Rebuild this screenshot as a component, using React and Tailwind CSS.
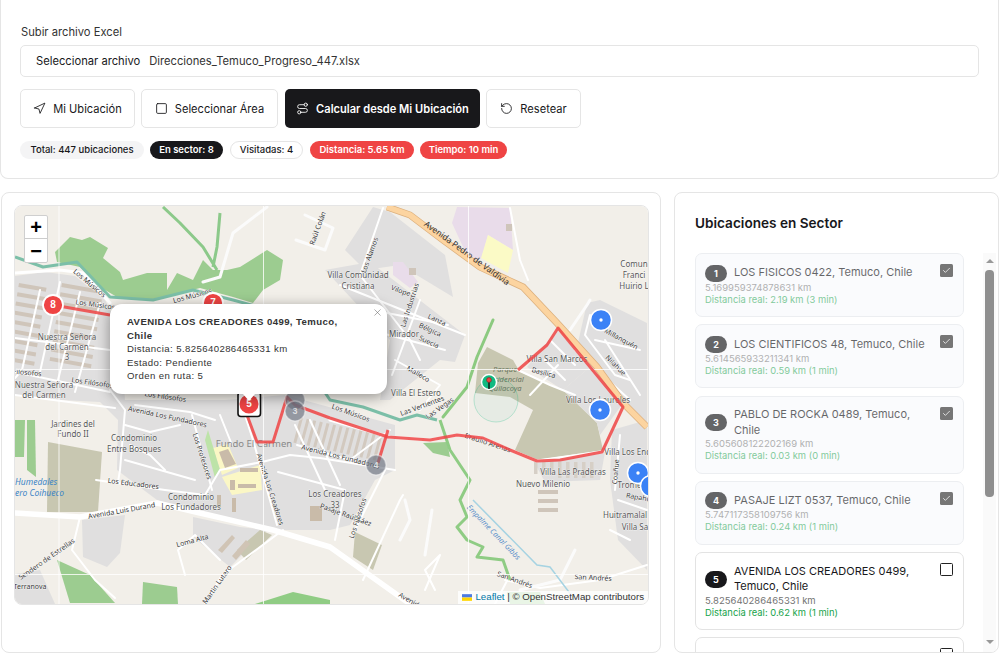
import React from "react";
import { Navigation, Square, Route, RotateCcw, Check, X } from "lucide-react";

const poly = (pts) => pts.map((p) => p.join(",")).join(" ");

const GREY = [
  [[15,276],[45,272],[75,276],[105,300],[120,330],[125,400],[225,400],[285,395],[395,425],[395,470],[375,480],[350,525],[330,530],[273,530],[200,513],[157,500],[117,470],[118,420],[100,402],[60,400],[15,395]],
  [[373,207],[390,212],[445,255],[453,297],[400,265],[365,270],[345,250]],
  [[325,270],[370,262],[465,335],[455,362],[440,360],[390,400],[380,400],[390,340]],
  [[587,303],[600,300],[647,323],[647,423],[623,403],[577,347]],
  [[557,330],[590,367],[563,390],[527,367]],
  [[563,390],[590,367],[623,403],[600,435],[597,423]],
  [[612,430],[647,420],[647,570],[618,540],[610,480]],
  [[533,460],[605,452],[600,480],[545,482]],
  [[193,517],[240,527],[267,530],[230,567],[193,537]],
  [[82,520],[125,515],[120,553],[107,567],[83,557]],
  [[15,574],[40,570],[55,604],[15,604]],
];

const GREEN = [
  [[55,252],[70,237],[82,240],[90,237],[108,248],[103,258],[120,272],[123,280],[147,273],[167,273],[167,290],[177,273],[193,280],[203,260],[213,270],[227,270],[240,267],[267,250],[283,260],[280,280],[263,290],[253,303],[233,297],[200,288],[153,300],[117,297],[100,287],[80,267],[57,262]],
  [[57,560],[90,575],[115,603],[70,603]],
  [[143,582],[177,587],[178,604],[142,604]],
  [[423,443],[447,442],[450,457],[433,453]],
  [[15,420],[25,420],[24,457],[15,457]],
  [[27,420],[35,420],[36,477],[27,470]],
];

const ROADS = [
  [[15,273],[60,270],[83,273],[110,303]],
  [[40,290],[22,370],[15,378]],
  [[60,282],[40,372]],
  [[80,292],[58,380]],
  [[100,303],[75,392]],
  [[15,338],[110,350]],
  [[15,372],[110,392]],
  [[15,395],[115,408]],
  [[110,390],[125,410],[120,470],[118,482]],
  [[96,480],[165,490],[205,495]],
  [[15,513],[80,517],[157,503],[200,513],[273,530],[330,547],[410,604]],
  [[205,495],[220,470],[262,462],[290,455],[320,458],[395,470]],
  [[240,400],[253,440],[277,525]],
  [[192,415],[212,490]],
  [[297,445],[350,460],[390,430]],
  [[385,470],[355,530]],
  [[278,472],[345,490],[335,540]],
  [[80,517],[72,550],[95,580],[115,598]],
  [[185,575],[178,550],[195,535],[220,560]],
  [[283,530],[222,575],[205,604]],
  [[363,580],[400,500],[403,495]],
  [[425,590],[440,555],[425,570],[435,590]],
  [[510,575],[495,604]],
  [[505,580],[540,588],[600,580],[647,565]],
  [[330,420],[390,437],[430,440],[457,435],[483,438],[510,450],[537,461],[602,452]],
  [[383,208],[360,275],[410,340],[420,360]],
  [[340,285],[465,335]],
  [[420,300],[392,375]],
  [[395,360],[440,385],[420,410]],
  [[510,208],[520,260],[528,280]],
  [[518,370],[550,385],[575,395]],
  [[558,365],[530,395]],
  [[575,350],[630,400]],
  [[590,315],[585,335],[615,375],[630,380]],
  [[595,340],[640,350]],
  [[620,435],[615,490]],
  [[618,500],[647,510]],
  [[610,530],[630,540]],
  [[125,425],[150,432],[180,425]],
  [[130,445],[150,455],[165,470]],
  [[220,415],[232,445]],
  [[295,425],[325,490]],
  [[310,420],[340,485]],
  [[125,460],[195,480]],
  [[135,405],[190,412],[215,420]],
  [[345,320],[330,350]],
  [[370,330],[445,350]],
  [[382,312],[448,325]],
  [[605,340],[640,395]],
  [[550,340],[575,365]],
  [[545,360],[565,380]],
];

const DASHED = [
  [[590,300],[587,305],[570,330]],
  [[267,207],[233,233],[220,277],[203,282]],
  [[296,240],[325,250],[333,228],[305,215]],
  [[400,540],[410,520],[405,500]],
  [[432,510],[425,555]],
  [[575,550],[560,580],[520,590]],
];

const LABELS = [
  ["Los Músicos",88,285,40,7],["Los Músicos",193,298,-15,7],["Los Músicos",95,307,8,7],
  ["Nuestra Señora",67,340,0,8],["del Carmen",67,350,0,8],["3",67,360,0,8],
  ["Filósofos",27,375,5,7],["Nuestra Señora",44,388,0,8],["del Carmen",44,398,0,8],["Los Filósofos",92,385,8,7],
  ["Los Filósofos",165,399,8,7],["Avenida Los Fundadores",167,419,12,7],
  ["Jardines del",73,427,0,8],["Fundo II",73,437,0,8],["Condominio",134,441,0,8],["Entre Bosques",134,452,0,8],
  ["Los Educadores",133,486,7,7],["Condominio",191,500,0,8],["Los Fundadores",191,510,0,8],
  ["Avenida Luis Durand",122,513,-10,7],["Avenida Los Creadores",268,490,72,7],["Los Profesores",200,457,72,7],
  ["Avenida Los Fundadores",340,459,14,7],["Los Creadores",335,497,0,8],["33",335,508,0,8],
  ["Pasaje Raúl Sáez",345,517,20,7],["Los Filósofos",360,519,-72,7],["Loma Alta",193,543,-15,7],
  ["Martin Lutero",219,586,-55,7],["Sendero de Estrellas",48,561,-35,7],["Terranova",30,589,0,7],
  ["Avenida Los",415,606,30,7],["San Andrés",514,582,20,7],["San Andrés",593,580,3,7],
  ["Nuevo Milenio",543,487,0,8],["Villa Las Praderas",573,475,0,8],["Braulio Arenas",487,445,18,7],
  ["Villa Los Encinos",635,455,0,8],["Tromen",632,488,0,8],["Huitramalal",625,518,0,8],["Villa Sa",635,530,0,8],
  ["Rapahue",640,500,10,7],["Coañue",618,472,-85,7],["Villa San Marcos",557,362,0,8],["Basílica",543,375,15,7],
  ["Villa Los Laureles",598,403,0,8],["Villa El Estero",416,396,0,8],["Mirador",404,337,0,8],
  ["Suecia",428,344,25,7],["Bélgica",429,332,25,7],["Lanza",436,322,25,7],["Las Industrias",412,306,-72,7],
  ["Villa Comunidad",358,278,0,8],["Cristiana",358,289,0,8],["Vilope",400,293,20,7],["Los Alamos",372,256,-70,7],
  ["Malleco",417,376,30,7],["Las Vertientes",423,408,-20,7],["Las Vegas",441,410,-35,7],
  ["Raúl Colán",320,229,-70,7],["Comun",634,267,0,8],["Franci",634,278,0,8],["Huirio L",634,289,0,8],
  ["Millanquén",620,341,28,7],["Nilahue",614,367,45,7],["Los Músicos",350,415,20,7],
];

function MapArt() {
  const stripes = [];
  for (let r = 0; r < 9; r++) {
    for (const x0 of [19, 62]) {
      stripes.push(<rect key={`a${r}${x0}`} x={x0 - r * 1.5} y={283 + r * 9.5} width={x0 === 19 ? 28 : 42} height={4} transform={`rotate(10 ${x0} ${283 + r * 9.5})`} fill="#cfc5ba" />);
    }
  }
  for (let i = 0; i < 13; i++) {
    stripes.push(<rect key={`b${i}`} x={298 + i * 7} y={417 + i * 1.5} width={3} height={26} transform={`rotate(15 ${298 + i * 7} 425)`} fill="#d2c9bf" />);
  }
  for (let i = 0; i < 8; i++) {
    stripes.push(<rect key={`c${i}`} x={534 + i * 8} y={462} width={3.5} height={i < 3 ? 12 : 16} fill="#d6cfc6" />);
  }
  for (let i = 0; i < 3; i++) {
    stripes.push(<rect key={`d${i}`} x={538} y={490 + i * 9} width={20} height={4} fill="#cfc5ba" />);
  }
  return (
    <svg viewBox="15 206 633 398" className="block w-full h-full" style={{ fontFamily: '"Noto Sans", sans-serif' }}>
      <rect x="15" y="206" width="633" height="398" fill="#f2efe9" />
      <polygon points="48,442 102,452 98,512 47,512" fill="#c8c7b1" />
      <polygon points="487,347 513,360 520,372 563,390 597,423 603,450 537,460 515,450 533,410 510,397 475,393 478,363" fill="#c8c7b1" />
      {GREY.map((p, i) => <polygon key={i} points={poly(p)} fill="#e0dfdf" />)}
      <polygon points="355,532 382,545 373,570 353,557" fill="#c8c7b1" />
      <polygon points="260,530 237,550 246,560 272,535" fill="#c8c7b1" />
      <polygon points="452,223 457,207 510,208 513,250 488,235 482,258 470,262" fill="#e9dcea" />
      <polygon points="393,262 403,262 418,282 410,288 393,275" fill="#e9dcea" />
      <rect x="409" y="268" width="7" height="7" fill="#cfc5ba" />
      <rect x="506" y="224" width="6" height="7" fill="#cfc5ba" />
      <polygon points="488,235 513,250 508,273 481,258" fill="#fbfac6" />
      <polygon points="213,448 228,444 238,468 222,475" fill="#fbf7c5" />
      <polygon points="222,477 260,465 262,490 232,495" fill="#fbf7c5" />
      <polygon points="219,452 228,449 236,464 225,468" fill="#c9bba9" />
      <rect x="240" y="468" width="18" height="4" fill="#c9bba9" />
      <rect x="238" y="484" width="18" height="4" fill="#c9bba9" />
      <rect x="230" y="480" width="5" height="10" fill="#c9bba9" />
      <rect x="217" y="495" width="4" height="12" fill="#c9bba9" />
      <rect x="232" y="498" width="4" height="14" fill="#c9bba9" />
      <polygon points="218,550 232,535 235,538 222,553" fill="#d0c4b5" />
      <polygon points="232,556 246,540 250,544 236,560" fill="#d0c4b5" />
      <rect x="310" y="506" width="12" height="15" fill="#c9bba9" />
      {GREEN.map((p, i) => <polygon key={i} points={poly(p)} fill="#9ccc90" />)}
      <polygon points="205,440 215,478 220,470 208,430" fill="#bde3a8" />
      {stripes}
      {ROADS.map((p, i) => (
        <polyline key={i} points={poly(p)} fill="none" stroke="#ffffff" strokeWidth={i === 10 ? 5.5 : i === 0 || i === 24 ? 3 : 2} strokeLinejoin="round" strokeLinecap="round" />
      ))}
      {DASHED.map((p, i) => (
        <polyline key={i} points={poly(p)} fill="none" stroke="#fbfbfb" strokeWidth="3" strokeLinejoin="round" strokeLinecap="round" />
      ))}
      <polyline points="15,257 43,267 77,262 110,297 153,300 193,290 233,300 270,310 330,400 363,407 400,420 417,415 437,420" fill="none" stroke="#7cbfa8" strokeWidth="3" strokeLinejoin="round" />
      <polyline points="493,320 477,357 467,387 443,417" fill="none" stroke="#8cca80" strokeWidth="3" strokeLinejoin="round" strokeLinecap="round" />
      <polyline points="163,207 180,223 203,247 217,270" fill="none" stroke="#8cc98a" strokeWidth="3" strokeLinejoin="round" />
      <polyline points="220,213 217,247 213,267" fill="none" stroke="#8cc98a" strokeWidth="3" strokeLinejoin="round" />
      <polyline points="440,420 450,450 470,480 460,500 467,517 457,527 467,540 483,547 477,557 503,560 510,580" fill="none" stroke="#8fcc84" strokeWidth="3" strokeLinejoin="round" />
      <polyline points="473,500 537,565 550,567 575,600" fill="none" stroke="#a6d3e2" strokeWidth="1.5" />
      <path d="M255 604 L293 592 L330 600 L330 604 Z" fill="#90cc84" />
      <path d="M507 592 L540 592 L545 604 L510 604 Z" fill="#90cc84" />
      <polyline points="387,207 410,215 443,240 480,267 523,287 557,323 597,367 623,403 647,427" fill="none" stroke="#dcb07e" strokeWidth="7" />
      <polyline points="387,207 410,215 443,240 480,267 523,287 557,323 597,367 623,403 647,427" fill="none" stroke="#fcd4a0" strokeWidth="5.5" />
      <text fill="#3d85c6" fontStyle="italic" fontSize="8.5"><tspan x="15" y="485">Humedales</tspan><tspan x="15" y="496">ero Coihueco</tspan></text>
      <text x="494" y="535" fill="#5b8fc9" fontStyle="italic" fontSize="7.5" textAnchor="middle" transform="rotate(46 494 532)">Empalme Canal Gibbs</text>
      <text x="254" y="447" fill="#888888" fontSize="9.5" textAnchor="middle">Fundo El Carmen</text>
      <text x="467" y="256" fill="#333" fontSize="8.5" textAnchor="middle" transform="rotate(36 467 253)">Avenida Pedro de Valdivia</text>
      <text fill="#68755e" fontStyle="italic" fontSize="7.5" textAnchor="middle"><tspan x="505" y="372">Parque</tspan><tspan x="505" y="382">Residencial</tspan><tspan x="505" y="391">Quilacoya</tspan></text>
      {LABELS.map(([t, x, y, r, s], i) => (
        <text key={i} x={x} y={y} fontSize={s} fill={s === 8 ? "#555" : "#333"} textAnchor="middle" transform={r ? `rotate(${r} ${x} ${y})` : undefined} stroke="#fff" strokeWidth="0.6" paintOrder="stroke">{t}</text>
      ))}
      <line x1="59" y1="206" x2="59" y2="604" stroke="#fff" strokeWidth="0.8" />
      <line x1="263.5" y1="206" x2="263.5" y2="604" stroke="#fff" strokeWidth="0.8" />
      <line x1="468.5" y1="206" x2="468.5" y2="604" stroke="#fff" strokeWidth="0.8" />
      <line x1="15" y1="369.5" x2="648" y2="369.5" stroke="#fff" strokeWidth="0.8" />
      <line x1="15" y1="574.5" x2="648" y2="574.5" stroke="#fff" strokeWidth="0.8" />
      <polyline points="53,305 110,315" fill="none" stroke="#ef4444" strokeOpacity="0.85" strokeWidth="3" />
      <polyline points="247,415 257,442 273,442 287,397 295,405 330,418 388,437 430,440 457,435 483,438 510,450 537,461 560,460 602,452 617,420 623,407 558,328 547,345 518,370" fill="none" stroke="#ef4444" strokeOpacity="0.85" strokeWidth="3" strokeLinejoin="round" />
      <polyline points="388,430 378,463" fill="none" stroke="#ef4444" strokeOpacity="0.85" strokeWidth="3" />
      <circle cx="496" cy="400" r="22" fill="#10b981" fillOpacity="0.05" stroke="#10b981" strokeOpacity="0.25" strokeWidth="1" />
      <circle cx="489" cy="382" r="7.5" fill="#10b981" stroke="#fff" strokeWidth="1.5" />
      <line x1="489" y1="382" x2="489" y2="389" stroke="#111" strokeWidth="1.4" />
      <circle cx="489" cy="380" r="2.4" fill="#ef4444" stroke="#7f1d1d" strokeWidth="0.6" />
      {[[601,320],[600,410],[638,473],[651,486]].map(([x, y], i) => (
        <g key={i}>
          <circle cx={x} cy={y} r="10.5" fill="#3b82f6" stroke="#fff" strokeWidth="1.5" />
          <circle cx={x} cy={y} r="1.7" fill="#fff" />
        </g>
      ))}
      <rect x="238" y="392" width="22.5" height="24.5" rx="3" fill="#fff" stroke="#111" strokeWidth="1.6" />
      {[[295,400,""],[295,411,"3"],[376,465,"4"]].map(([x, y, n], i) => (
        <g key={i}>
          <circle cx={x} cy={y} r="10" fill="#6b7280" fillOpacity="0.65" stroke="#fff" strokeOpacity="0.4" strokeWidth="1.5" />
          <text x={x} y={y + 3.2} textAnchor="middle" fontSize="9" fontWeight="700" fill="#fff" fillOpacity="0.7" style={{ fontFamily: '"Liberation Sans", sans-serif' }}>{n}</text>
        </g>
      ))}
      {[[53,305,"8"],[213,303,"7"],[249,404,"5"]].map(([x, y, n], i) => (
        <g key={i}>
          <circle cx={x} cy={y} r={i === 2 ? 9.5 : 10} fill="#ef4444" stroke={i === 2 ? "none" : "#fff"} strokeWidth="1.8" />
          <text x={x} y={y + 3.4} textAnchor="middle" fontSize="10" fontWeight="700" fill="#fff" style={{ fontFamily: '"Liberation Sans", sans-serif' }}>{n}</text>
        </g>
      ))}
    </svg>
  );
}

const Btn = ({ icon: I, children, dark, className = "" }) => (
  <button className={`h-[39px] flex items-center justify-center gap-[7px] rounded-[5px] text-[11.1px] ${dark ? "bg-[#18181b] text-white font-semibold" : "bg-white border border-[#e5e5e5] text-[#18181b] font-normal"} ${className}`}>
    <I size={13} strokeWidth={1.6} />
    <span className="pt-[1px]">{children}</span>
  </button>
);

const Badge = ({ children, className = "" }) => (
  <span className={`h-[18px] flex items-center justify-center rounded-full text-[9.5px] ${className}`}>{children}</span>
);

const ITEMS = [
  { n: 1, name: "LOS FISICOS 0422, Temuco, Chile", d: "5.169959374878631 km", r: "Distancia real: 2.19 km (3 min)", done: true },
  { n: 2, name: "LOS CIENTIFICOS 48, Temuco, Chile", d: "5.614565933211341 km", r: "Distancia real: 0.59 km (1 min)", done: true },
  { n: 3, name: "PABLO DE ROCKA 0489, Temuco, Chile", d: "5.605608122202169 km", r: "Distancia real: 0.03 km (0 min)", done: true },
  { n: 4, name: "PASAJE LIZT 0537, Temuco, Chile", d: "5.747117358109756 km", r: "Distancia real: 0.24 km (1 min)", done: true },
  { n: 5, name: "AVENIDA LOS CREADORES 0499, Temuco, Chile", d: "5.825640286465331 km", r: "Distancia real: 0.62 km (1 min)", done: false },
  { n: 6, name: "NICOLO PAGANINI 0241, Temuco, Chile", d: "5.9 km", r: "", done: false },
];

const Item = ({ n, name, d, r, done }) => (
  <div className={`shrink-0 relative rounded-[7px] border pl-[9px] pr-[10px] py-[10.5px] ${done ? "bg-[#fafbfd] border-[#eceef1]" : "bg-white border-[#e3e3e3]"}`}>
    <div className={`flex items-center gap-[7px] pr-[24px] ${done ? "opacity-[0.66]" : ""}`}>
      <span className="shrink-0 h-[17px] px-[8px] rounded-full bg-[#18181b] text-white text-[9px] font-bold flex items-center justify-center leading-none min-w-[22px]">{n}</span>
      <span className="text-[11px] leading-[15.5px] font-normal text-[#18181b]">{name}</span>
    </div>
    <div className={`text-[9.5px] leading-[12px] text-[#737373] ${done ? "opacity-[0.55]" : ""}`}>{d}</div>
    <div className={`text-[9.4px] leading-[12px] text-[#16a34a] ${done ? "opacity-[0.55]" : ""}`}>{r}</div>
    <span className={`absolute right-[10px] top-[10px] w-[13px] h-[13px] rounded-[1.5px] flex items-center justify-center ${done ? "bg-[#767676]" : "bg-white border border-[#222]"}`}>
      {done && <Check size={9} strokeWidth={2} color="#fff" />}
    </span>
  </div>
);

export default function App() {
  return (
    <div className="w-[999px] h-[664px] bg-white flex flex-col gap-[13px] overflow-hidden text-[#18181b]" style={{ fontFamily: 'Inter, "Liberation Sans", sans-serif' }}>
      <section className="h-[179px] shrink-0 border border-t-0 border-[#e5e5e5] rounded-b-[8px] px-[19px] pt-[25px]">
        <label className="block text-[11.2px] leading-[14px] font-normal text-[#333] pl-[1px]">Subir archivo Excel</label>
        <div className="mt-[6px] h-[32px] border border-[#e5e5e5] rounded-[5px] flex items-center pl-[15px] text-[11.2px]">
          <span className="font-normal mr-[9px]">Seleccionar archivo</span>
          <span className="text-[#333]">Direcciones_Temuco_Progreso_447.xlsx</span>
        </div>
        <div className="mt-[12px] flex gap-[6px]">
          <Btn icon={Navigation} className="w-[115px]">Mi Ubicación</Btn>
          <Btn icon={Square} className="w-[137px]">Seleccionar Área</Btn>
          <Btn icon={Route} dark className="w-[195px] ml-[1px]">Calcular desde Mi Ubicación</Btn>
          <Btn icon={RotateCcw} className="w-[95px]">Resetear</Btn>
        </div>
        <div className="mt-[13px] flex gap-[6px]">
          <Badge className="w-[124px] bg-[#f4f4f5] font-medium">Total: 447 ubicaciones</Badge>
          <Badge className="w-[73px] bg-[#18181b] text-white font-semibold">En sector: 8</Badge>
          <Badge className="w-[73px] ml-[1px] bg-white border border-[#e5e5e5] font-medium">Visitadas: 4</Badge>
          <Badge className="w-[104px] ml-[1px] bg-[#ef4444] text-white font-semibold">Distancia: 5.65 km</Badge>
          <Badge className="w-[87px] bg-[#ef4444] text-white font-semibold">Tiempo: 10 min</Badge>
        </div>
      </section>

      <div className="flex gap-[13px] h-[461px] shrink-0 pl-[1px]">
        <section className="w-[660px] border border-[#e5e5e5] rounded-[8px] pt-[12px] pl-[12px]">
          <div className="relative w-[635px] h-[400px] rounded-[8px] border border-[#e5e5e5] overflow-hidden">
            <MapArt />
            <div className="absolute left-[9px] top-[9px] w-[24px] h-[48px] bg-white rounded-[2px] border border-[#cfcfcf] flex flex-col text-black" style={{ fontFamily: '"Liberation Sans", sans-serif' }}>
              <span className="h-[23px] flex items-center justify-center text-[20px] font-bold border-b border-[#ccc] leading-none">+</span>
              <span className="flex-1 flex items-center justify-center text-[20px] font-bold leading-none">−</span>
            </div>
            <div className="absolute left-[95px] top-[98px] w-[277px] h-[90px] bg-white rounded-[12px] shadow-[0_3px_14px_rgba(0,0,0,0.4)] pl-[17px] pt-[11px] text-[9.6px] leading-[13.6px] tracking-[0.4px] text-[#333]" style={{ fontFamily: '"Liberation Sans", sans-serif' }}>
              <div className="font-bold w-[225px]">AVENIDA LOS CREADORES 0499, Temuco, Chile</div>
              <div>Distancia: 5.825640286465331 km</div>
              <div>Estado: Pendiente</div>
              <div>Orden en ruta: 5</div>
              <X size={11} strokeWidth={1.2} color="#666" className="absolute right-[4px] top-[3px]" />
            </div>
            <div className="absolute left-[228px] top-[188px] w-0 h-0 border-x-[6px] border-x-transparent border-t-[7px] border-t-white" />
            <div className="absolute right-0 bottom-0 h-[13px] bg-white/80 pl-[4px] pr-[4px] flex items-center text-[9.7px] text-[#333]" style={{ fontFamily: '"Liberation Sans", sans-serif' }}>
              <svg width="10" height="7" viewBox="0 0 12 8" className="mr-[3px]">
                <rect width="12" height="4" fill="#4C7BE1" />
                <rect y="4" width="12" height="4" fill="#FFD500" />
              </svg>
              <span className="text-[#0078a8]">Leaflet</span>
              <span>&nbsp;| © OpenStreetMap contributors</span>
            </div>
          </div>
        </section>

        <section className="w-[325px] border border-[#e5e5e5] rounded-[8px] pl-[20px] pr-[2px] pt-[20px] overflow-hidden flex flex-col">
          <h2 className="text-[13.6px] leading-[20px] font-semibold">Ubicaciones en Sector</h2>
          <div className="mt-[20px] flex-1 min-h-0 flex">
            <div className="w-[269px] shrink-0 flex flex-col gap-[7.3px] overflow-hidden">
              {ITEMS.map((it) => <Item key={it.n} {...it} />)}
            </div>
            <div className="ml-[19px] w-[13px] shrink-0 bg-[#fafafa] flex flex-col items-center pt-[6px]">
              <span className="w-0 h-0 border-x-[4px] border-x-transparent border-b-[4px] border-b-[#999]" />
              <span className="mt-[7px] w-[9px] h-[227px] rounded-[4px] bg-[#8f8f8f]" />
              <span className="mt-[143px] w-0 h-0 border-x-[4px] border-x-transparent border-t-[4px] border-t-[#999]" />
            </div>
          </div>
        </section>
      </div>
    </div>
  );
}
